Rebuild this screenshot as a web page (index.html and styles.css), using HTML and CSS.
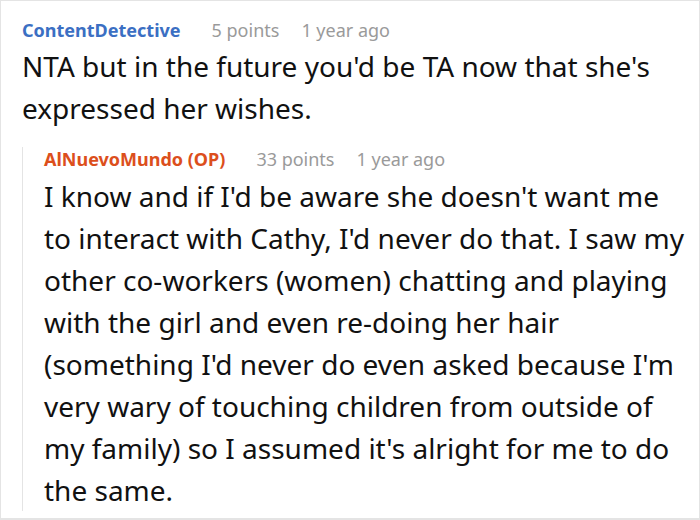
FILE: index.html
```html
<!DOCTYPE html>
<html>
<head>
<meta charset="utf-8">
<link rel="stylesheet" href="styles.css">
</head>
<body>
<div class="frame">
  <div class="comment">
    <div class="meta">
      <span class="author author-blue">ContentDetective</span>
      <span class="info">5 points</span>
      <span class="info">1 year ago</span>
    </div>
    <p class="text">NTA but in the future you'd be TA now that she's expressed her wishes.</p>
    <div class="reply">
      <div class="meta meta-reply">
        <span class="author author-orange">AlNuevoMundo (OP)</span>
        <span class="info">33 points</span>
        <span class="info">1 year ago</span>
      </div>
      <p class="text text-reply">I know and if I'd be aware she doesn't want me to interact with Cathy, I'd never do that. I saw my other co-workers (women) chatting and playing with the girl and even re-doing her hair (something I'd never do even asked because I'm very wary of touching children from outside of my family) so I assumed it's alright for me to do the same.</p>
    </div>
  </div>
</div>
</body>
</html>
```

FILE: styles.css
```css
html, body {
  margin: 0;
  padding: 0;
  background: #ffffff;
}

.frame {
  box-sizing: border-box;
  width: 700px;
  height: 520px;
  border: 1px solid #e4e4e4;
  border-bottom-width: 2px;
  overflow: hidden;
  font-family: "Noto Sans", "Open Sans", sans-serif;
  color: #111111;
}

.comment {
  padding: 17px 13px 0 21px;
}

.meta {
  display: flex;
  align-items: baseline;
  gap: 22px;
  line-height: 24px;
  white-space: nowrap;
}

.author {
  font-size: 18px;
  font-weight: 700;
  margin-right: 9px;
}

.author-blue {
  color: #3b6fc3;
}

.author-orange {
  color: #dc4f1c;
}

.info {
  font-size: 18px;
  color: #9a9a9a;
}

.text {
  margin: 3px 0 0 0;
  font-size: 28px;
  line-height: 42px;
}

.reply {
  margin-top: 28px;
  padding: 0 0 0 21px;
  border-left: 1px solid #e4e4e4;
}

.meta-reply {
  margin-top: -10px;
}

.text-reply {
  margin-top: 4px;
  margin-bottom: -12px;
}
```
